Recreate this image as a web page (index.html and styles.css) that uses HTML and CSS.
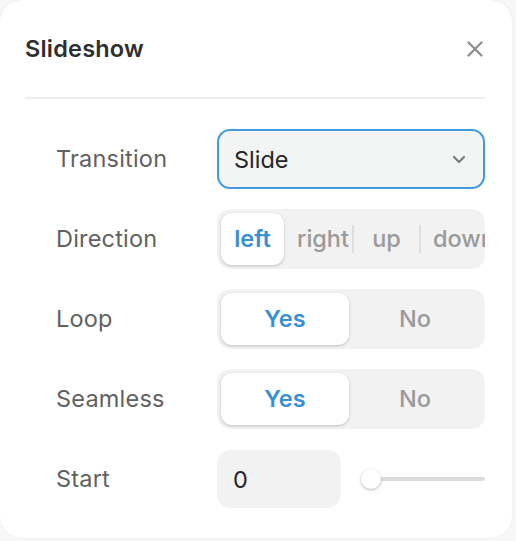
FILE: index.html
```html
<!DOCTYPE html>
<html>
<head>
<meta charset="utf-8">
<link rel="stylesheet" href="styles.css">
</head>
<body>
<div class="card">
  <div class="header">
    <div class="title">Slideshow</div>
    <svg class="close" width="16" height="16" viewBox="0 0 16 16"><path d="M1.5 1.5 L14.5 14.5 M14.5 1.5 L1.5 14.5" stroke="#8a8a8a" stroke-width="2.2" stroke-linecap="round" fill="none"/></svg>
  </div>
  <div class="form">
    <div class="label">Transition</div>
    <div class="select">
      <span>Slide</span>
      <svg class="chev" width="14" height="9" viewBox="0 0 14 9"><path d="M2 2 L7 7 L12 2" stroke="#7a7a7a" stroke-width="2.2" stroke-linecap="round" stroke-linejoin="round" fill="none"/></svg>
    </div>

    <div class="label">Direction</div>
    <div class="seg dir">
      <div class="opt on d-left">left</div>
      <div class="opt d-right">right</div>
      <div class="sep"></div>
      <div class="opt d-up">up</div>
      <div class="sep"></div>
      <div class="opt d-down">down</div>
    </div>

    <div class="label">Loop</div>
    <div class="seg two">
      <div class="opt on">Yes</div>
      <div class="opt">No</div>
    </div>

    <div class="label">Seamless</div>
    <div class="seg two">
      <div class="opt on">Yes</div>
      <div class="opt">No</div>
    </div>

    <div class="label">Start</div>
    <div class="start">
      <div class="num">0</div>
      <div class="slider">
        <div class="track"></div>
        <div class="thumb"></div>
      </div>
    </div>
  </div>
</div>
</body>
</html>
```

FILE: styles.css
```css
html, body {
  margin: 0;
  padding: 0;
  background: #f7f7f7;
}
body {
  font-family: Inter, "Noto Sans", sans-serif;
  width: 516px;
  height: 541px;
  overflow: hidden;
}
.card {
  box-sizing: border-box;
  width: 512px;
  height: 538px;
  background: #fff;
  border-radius: 22px;
  box-shadow: 0 0 3px rgba(0,0,0,0.06);
  padding: 0 27px 0 25px;
}
.header {
  height: 97px;
  border-bottom: 2px solid #eeeeee;
  display: flex;
  align-items: center;
  justify-content: space-between;
}
.title {
  font-size: 23.5px;
  font-weight: 600;
  color: #2e2e2e;
  letter-spacing: 0.2px;
}
.close {
  margin-right: 2px;
}
.form {
  margin-top: 30px;
  padding-left: 31px;
  display: grid;
  grid-template-columns: 161px 268px;
  grid-auto-rows: 60px;
  row-gap: 20px;
  align-items: center;
}
.label {
  font-size: 23.5px;
  color: #616161;
  padding-bottom: 2px;
  letter-spacing: 0.2px;
}
.select {
  box-sizing: border-box;
  height: 60px;
  border: 2px solid #3f9be0;
  border-radius: 13px;
  background: #f3f4f4;
  display: flex;
  align-items: center;
  justify-content: space-between;
  padding: 0 17px 0 15px;
  font-size: 23.5px;
  color: #262626;
}
.seg {
  box-sizing: border-box;
  height: 60px;
  background: #f2f2f2;
  border-radius: 14px;
  padding: 4px;
  display: flex;
  align-items: stretch;
  overflow: hidden;
}
.opt {
  display: flex;
  align-items: center;
  justify-content: center;
  font-size: 23.5px;
  font-weight: 500;
  color: #9a9a9a;
  white-space: nowrap;
  flex: none;
  padding-bottom: 2px;
}
.opt.on {
  background: #fff;
  border-radius: 11px;
  color: #3b8fd7;
  font-weight: 600;
  box-shadow: 0 1px 3px rgba(0,0,0,0.22);
}
.two .opt {
  flex: 1 1 0;
}
.two .opt.on {
  flex: 0 0 128px;
}
.d-left { width: 63px; }
.d-right { width: 68px; justify-content: flex-start; padding-left: 13px; box-sizing: border-box; }
.d-up { width: 65px; }
.d-down { justify-content: flex-start; padding-left: 12px; }
.sep {
  flex: none;
  width: 2px;
  height: 28px;
  align-self: center;
  background: #dedede;
}
.start {
  display: flex;
  align-items: center;
  gap: 20px;
  height: 60px;
}
.num {
  box-sizing: border-box;
  width: 124px;
  height: 58px;
  background: #f2f2f2;
  border-radius: 14px;
  display: flex;
  align-items: center;
  padding-left: 16px;
  font-size: 23.5px;
  color: #262626;
}
.slider {
  position: relative;
  flex: 1;
  height: 22px;
}
.track {
  position: absolute;
  left: 8px;
  right: 0;
  top: 9px;
  height: 4px;
  border-radius: 2px;
  background: #dcdcdc;
}
.thumb {
  position: absolute;
  left: 0;
  top: 1px;
  width: 20px;
  height: 20px;
  border-radius: 50%;
  background: #fff;
  box-shadow: 0 1px 3px rgba(0,0,0,0.3);
}
```
